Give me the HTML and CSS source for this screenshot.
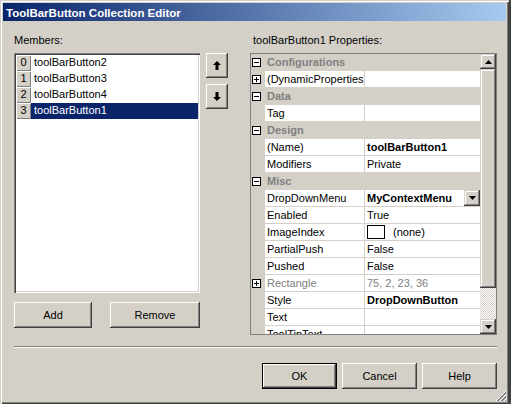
FILE: index.html
```html
<!DOCTYPE html>
<html lang="en">
<head>
    <meta charset="UTF-8">
    <title>ToolBarButton Collection Editor</title>
    <link rel="stylesheet" href="styles.css">
</head>
<body>
    <div class="window">
        <div class="titlebar">ToolBarButton Collection Editor</div>

        <div class="editor">
            <div class="members">
                <div class="label">Members:</div>
                <div class="listbox">
                    <div class="item"><span class="index">0</span><span class="item-name">toolBarButton2</span></div>
                    <div class="item"><span class="index">1</span><span class="item-name">toolBarButton3</span></div>
                    <div class="item"><span class="index">2</span><span class="item-name">toolBarButton4</span></div>
                    <div class="item selected"><span class="index">3</span><span class="item-name">toolBarButton1</span></div>
                </div>
                <div class="member-buttons">
                    <button class="btn add">Add</button>
                    <button class="btn remove">Remove</button>
                </div>
            </div>

            <div class="arrows">
                <button class="btn arrow">
                    <svg width="8" height="9" viewBox="0 0 8 9"><polygon points="4,0 8,4 5.5,4 5.5,9 2.5,9 2.5,4 0,4" fill="#000"/></svg>
                </button>
                <button class="btn arrow">
                    <svg width="8" height="9" viewBox="0 0 8 9"><polygon points="4,9 8,5 5.5,5 5.5,0 2.5,0 2.5,5 0,5" fill="#000"/></svg>
                </button>
            </div>

            <div class="props">
                <div class="label">toolBarButton1 Properties:</div>
                <div class="propgrid">
                    <div class="rows">
                        <div class="row cat">
                            <span class="gutter"><svg width="9" height="9"><rect x="0.5" y="0.5" width="8" height="8" fill="#fff" stroke="#000"/><path d="M2 4.5h5" stroke="#000"/></svg></span>
                            <span class="title">Configurations</span>
                        </div>
                        <div class="row">
                            <span class="gutter"><svg width="9" height="9"><rect x="0.5" y="0.5" width="8" height="8" fill="#fff" stroke="#000"/><path d="M2 4.5h5M4.5 2v5" stroke="#000"/></svg></span>
                            <span class="name">(DynamicProperties)</span>
                            <span class="value"></span>
                        </div>
                        <div class="row cat">
                            <span class="gutter"><svg width="9" height="9"><rect x="0.5" y="0.5" width="8" height="8" fill="#fff" stroke="#000"/><path d="M2 4.5h5" stroke="#000"/></svg></span>
                            <span class="title">Data</span>
                        </div>
                        <div class="row">
                            <span class="gutter"></span>
                            <span class="name">Tag</span>
                            <span class="value"></span>
                        </div>
                        <div class="row cat">
                            <span class="gutter"><svg width="9" height="9"><rect x="0.5" y="0.5" width="8" height="8" fill="#fff" stroke="#000"/><path d="M2 4.5h5" stroke="#000"/></svg></span>
                            <span class="title">Design</span>
                        </div>
                        <div class="row">
                            <span class="gutter"></span>
                            <span class="name">(Name)</span>
                            <span class="value bold">toolBarButton1</span>
                        </div>
                        <div class="row">
                            <span class="gutter"></span>
                            <span class="name">Modifiers</span>
                            <span class="value">Private</span>
                        </div>
                        <div class="row cat">
                            <span class="gutter"><svg width="9" height="9"><rect x="0.5" y="0.5" width="8" height="8" fill="#fff" stroke="#000"/><path d="M2 4.5h5" stroke="#000"/></svg></span>
                            <span class="title">Misc</span>
                        </div>
                        <div class="row">
                            <span class="gutter"></span>
                            <span class="name">DropDownMenu</span>
                            <span class="value bold">MyContextMenu
                                <span class="dropdown"><svg width="7" height="4"><polygon points="0,0 7,0 3.5,4" fill="#000"/></svg></span>
                            </span>
                        </div>
                        <div class="row">
                            <span class="gutter"></span>
                            <span class="name">Enabled</span>
                            <span class="value">True</span>
                        </div>
                        <div class="row">
                            <span class="gutter"></span>
                            <span class="name">ImageIndex</span>
                            <span class="value"><span class="swatch"></span>(none)</span>
                        </div>
                        <div class="row">
                            <span class="gutter"></span>
                            <span class="name">PartialPush</span>
                            <span class="value">False</span>
                        </div>
                        <div class="row">
                            <span class="gutter"></span>
                            <span class="name">Pushed</span>
                            <span class="value">False</span>
                        </div>
                        <div class="row readonly">
                            <span class="gutter"><svg width="9" height="9"><rect x="0.5" y="0.5" width="8" height="8" fill="#fff" stroke="#000"/><path d="M2 4.5h5M4.5 2v5" stroke="#000"/></svg></span>
                            <span class="name">Rectangle</span>
                            <span class="value">75, 2, 23, 36</span>
                        </div>
                        <div class="row">
                            <span class="gutter"></span>
                            <span class="name">Style</span>
                            <span class="value bold">DropDownButton</span>
                        </div>
                        <div class="row">
                            <span class="gutter"></span>
                            <span class="name">Text</span>
                            <span class="value"></span>
                        </div>
                        <div class="row">
                            <span class="gutter"></span>
                            <span class="name">ToolTipText</span>
                            <span class="value"></span>
                        </div>
                    </div>
                    <div class="scrollbar">
                        <span class="sb-btn"><svg width="7" height="4"><polygon points="3.5,0 7,4 0,4" fill="#000"/></svg></span>
                        <span class="sb-thumb"></span>
                        <span class="sb-track"></span>
                        <span class="sb-btn"><svg width="7" height="4"><polygon points="0,0 7,0 3.5,4" fill="#000"/></svg></span>
                    </div>
                </div>
            </div>
        </div>

        <div class="separator"></div>

        <div class="dialog-buttons">
            <button class="btn default">OK</button>
            <button class="btn">Cancel</button>
            <button class="btn">Help</button>
        </div>

        <svg class="grip" width="12" height="12" viewBox="0 0 12 12">
            <path d="M11 1L1 11M11 5L5 11M11 9L9 11" stroke="#fff"/>
            <path d="M11 2L2 11M11 3L3 11M11 6L6 11M11 7L7 11M11 10L10 11" stroke="#808080"/>
        </svg>
    </div>
</body>
</html>
```

FILE: styles.css
```css
html {
    background: #404040;
}
body {
    margin: 0;
    font-family: "Liberation Sans", Arial, sans-serif;
    font-size: 11px;
    color: #000;
}
.window {
    position: relative;
    width: 509px;
    height: 404px;
    box-sizing: border-box;
    padding: 3px;
    background: #d4d0c8;
    box-shadow: inset 1px 1px #d4d0c8, inset 2px 2px #fff, inset -1px -1px #404040, inset -2px -2px #808080;
}
.titlebar {
    height: 18px;
    box-sizing: border-box;
    padding: 2px 0 0 3px;
    line-height: 16px;
    font-size: 11.5px;
    font-weight: bold;
    color: #fff;
    background: linear-gradient(to right, #0a246a, #a6caf0);
}

/* buttons */
.btn {
    font: inherit;
    color: #000;
    background: #d4d0c8;
    border: none;
    padding: 0;
    box-shadow: inset -1px -1px #404040, inset 1px 1px #fff, inset -2px -2px #808080, inset 2px 2px #d4d0c8;
}
.btn.default {
    box-shadow: inset 0 0 0 1px #000, inset -2px -2px #404040, inset 2px 2px #fff, inset -3px -3px #808080;
}

/* top part */
.editor {
    display: flex;
    align-items: flex-start;
    margin: 13px 0 0 11px;
}
.label {
    height: 13px;
    line-height: 13px;
    margin-bottom: 6px;
    white-space: nowrap;
}
.members {
    width: 186px;
}
.listbox {
    height: 240px;
    box-sizing: border-box;
    padding: 2px;
    background: #fff;
    box-shadow: inset 1px 1px #808080, inset 2px 2px #404040, inset -1px -1px #fff, inset -2px -2px #d4d0c8;
}
.item {
    display: flex;
    height: 16px;
    line-height: 15px;
}
.index {
    width: 15px;
    box-sizing: border-box;
    text-align: center;
    background: #d4d0c8;
    box-shadow: inset 1px 1px #fff, inset -1px -1px #808080;
}
.item-name {
    flex: 1;
    padding-left: 3px;
}
.selected .item-name {
    background: #0a246a;
    color: #fff;
}
.member-buttons {
    display: flex;
    justify-content: space-between;
    margin-top: 9px;
}
.add {
    width: 78px;
    height: 26px;
}
.remove {
    width: 90px;
    height: 26px;
}

.arrows {
    display: flex;
    flex-direction: column;
    gap: 6px;
    margin: 19px 0 0 6px;
}
.arrow {
    width: 22px;
    height: 25px;
    display: flex;
    align-items: center;
    justify-content: center;
}

/* property grid */
.props {
    width: 247px;
    margin-left: 22px;
}
.props .label {
    padding-left: 3px;
}
.propgrid {
    display: flex;
    height: 282px;
    box-sizing: border-box;
    border: 1px solid #808080;
    background: #d4d0c8;
}
.rows {
    flex: 1;
    overflow: hidden;
}
.row {
    display: flex;
    height: 17px;
    box-sizing: border-box;
    border-bottom: 1px solid #d4d0c8;
    line-height: 16px;
    white-space: nowrap;
}
.gutter {
    width: 14px;
    flex: none;
    display: flex;
    align-items: center;
}
.gutter svg {
    margin-left: 1px;
}
.cat .title {
    padding-left: 2px;
    font-weight: bold;
    color: #808080;
}
.name {
    width: 99px;
    flex: none;
    box-sizing: border-box;
    padding-left: 2px;
    overflow: hidden;
    background: #fff;
}
.value {
    flex: 1;
    display: flex;
    align-items: center;
    margin-left: 1px;
    padding-left: 2px;
    overflow: hidden;
    background: #fff;
}
.value.bold {
    font-weight: bold;
}
.readonly .name,
.readonly .value {
    color: #808080;
}
.dropdown {
    width: 16px;
    height: 16px;
    margin-left: auto;
    display: flex;
    align-items: center;
    justify-content: center;
    background: #d4d0c8;
    box-shadow: inset -1px -1px #404040, inset 1px 1px #d4d0c8, inset -2px -2px #808080, inset 2px 2px #fff;
}
.swatch {
    width: 18px;
    height: 14px;
    box-sizing: border-box;
    border: 1px solid #000;
    margin-right: 8px;
}

.scrollbar {
    width: 16px;
    display: flex;
    flex-direction: column;
}
.sb-btn,
.sb-thumb {
    background: #d4d0c8;
    box-shadow: inset -1px -1px #404040, inset 1px 1px #d4d0c8, inset -2px -2px #808080, inset 2px 2px #fff;
}
.sb-btn {
    height: 15px;
    display: flex;
    align-items: center;
    justify-content: center;
}
.sb-thumb {
    height: 219px;
}
.sb-track {
    flex: 1;
    background: repeating-conic-gradient(#fff 0 25%, #d4d0c8 0 50%) 0 0 / 2px 2px;
}

/* bottom part */
.separator {
    margin: 11px 9px 0 11px;
    border-top: 1px solid #808080;
    border-bottom: 1px solid #fff;
}
.dialog-buttons {
    display: flex;
    justify-content: flex-end;
    gap: 5px;
    margin: 15px 9px 0 0;
}
.dialog-buttons .btn {
    width: 75px;
    height: 26px;
}
.grip {
    position: absolute;
    right: 2px;
    bottom: 2px;
}
```
